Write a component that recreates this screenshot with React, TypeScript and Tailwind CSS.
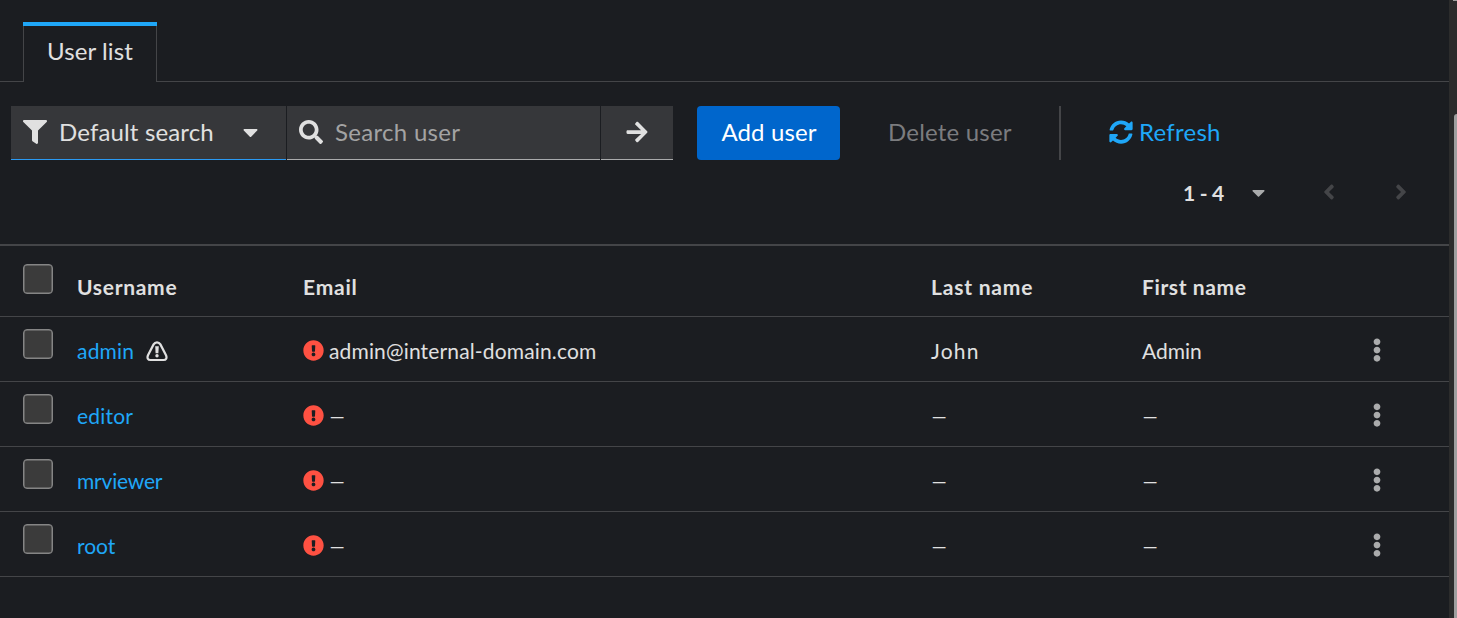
import React from "react";
import {
  FaAngleLeft,
  FaAngleRight,
  FaArrowRight,
  FaCaretDown,
  FaEllipsisV,
  FaExclamationCircle,
  FaFilter,
  FaSearch,
  FaSyncAlt,
} from "react-icons/fa";

type User = { username: string; warn?: boolean; email: string; last: string; first: string };

const users: User[] = [
  { username: "admin", warn: true, email: "admin@internal-domain.com", last: "John", first: "Admin" },
  { username: "editor", email: "–", last: "–", first: "–" },
  { username: "mrviewer", email: "–", last: "–", first: "–" },
  { username: "root", email: "–", last: "–", first: "–" },
];

const spacing: Record<string, string> = {
  admin: "tracking-[0.2px]",
  editor: "tracking-[0.2px]",
  mrviewer: "tracking-[-0.2px]",
  root: "tracking-[0px]",
  John: "tracking-[1.2px]",
  "admin@internal-domain.com": "tracking-[0.15px]",
  "–": "scale-x-[1.5] origin-left -ml-[1.5px]",
};

const columns = "grid grid-cols-[77px_226px_628px_211px_223px_84px]";

function Value({ text }: { text: string }) {
  return <span className={`inline-block ${spacing[text] ?? ""}`}>{text}</span>;
}

function WarningIcon() {
  return (
    <svg className="ml-3 h-[21px] w-[22px]" viewBox="0 0 22 21" fill="none">
      <path
        d="M7.6 3.4C9.2 .6 12.8 .6 14.4 3.4L20 14.2C21.2 17 20.1 19 17.6 19H4.4C1.9 19 .8 17 2 14.2Z"
        stroke="#e0e0e0"
        strokeWidth="2.2"
      />
      <path d="M9.2 5.2h3.6l-.4 7H9.6z" fill="#e0e0e0" />
      <circle cx="11" cy="14.8" r="1.7" fill="#e0e0e0" />
    </svg>
  );
}

function Checkbox() {
  return (
    <div className="ml-[23px] h-[30px] w-[30px] rounded-[4px] border-[1.5px] border-[#858585] bg-[#3b3b3b] shadow-[inset_0_0_0_0.5px_#858585]" />
  );
}

export default function App() {
  return (
    <div className="flex h-[618px] w-[1457px] overflow-hidden bg-[#1b1d21] font-['Lato',sans-serif] text-[#e0e0e0]">
      <main className="w-[1449px] shrink-0">
        <nav className="flex h-[82px] items-end">
          <div className="h-px w-[23px] bg-[#444548]" />
          <div className="flex h-[60px] w-[134px] flex-col border-x border-[#444548]">
            <div className="-mx-px h-1 shrink-0 bg-[#1fa7f8]" />
            <span className="pl-[23px] pt-[10px] text-2xl leading-[30px] tracking-[0.1px] whitespace-nowrap">User list</span>
          </div>
          <div className="h-px flex-1 bg-[#444548]" />
        </nav>

        <div className="flex h-[78px] pl-[11px] pt-6 text-2xl">
          <button className="flex h-[54px] w-[275px] items-center border-b border-[#2b9af3] bg-[#36373a] pb-px pl-3">
            <FaFilter className="h-6 w-6" />
            <span className="ml-3 w-[184px] whitespace-nowrap pb-px text-left tracking-[0.15px]">Default search</span>
            <FaCaretDown className="h-6 w-[15px]" />
          </button>
          <div className="ml-px flex h-[54px] w-[313px] items-center border-b border-[#aaabac] bg-[#36373a] pb-px pl-3">
            <FaSearch className="h-6 w-6" />
            <span className="ml-3 whitespace-nowrap pb-px tracking-[0.3px] text-[#a3a3a3]">Search user</span>
          </div>
          <button className="ml-px flex h-[54px] w-[72px] items-center justify-center border-b border-[#aaabac] bg-[#36373a] pb-px">
            <FaArrowRight className="h-6 w-[22px]" />
          </button>
          <button className="ml-6 flex h-[54px] w-[143px] items-center justify-center rounded-[4px] bg-[#0066cc] pb-0.5 pl-px tracking-[0.1px] text-white">
            Add user
          </button>
          <button className="ml-6 flex h-[54px] w-[171px] items-center whitespace-nowrap pb-0.5 pl-6 tracking-[0.2px] text-[#7b7c7f]">
            Delete user
          </button>
          <div className="ml-6 h-[54px] w-0.5 bg-[#444548]" />
          <button className="ml-12 flex h-[54px] items-center pb-0.5 text-[#1fa7f8]">
            <FaSyncAlt className="h-6 w-6" />
            <span className="ml-[6px] tracking-[0.25px]">Refresh</span>
          </button>
        </div>

        <div className="flex h-[84px] items-start pl-[1183px] pt-[15px]">
          <span className="flex h-9 w-[68px] items-center text-[21px] font-bold tracking-[-0.3px]">1 - 4</span>
          <FaCaretDown className="mt-[7px] h-[21px] w-[15px] text-[#aaabac]" />
          <FaAngleLeft className="ml-[54px] mt-[5px] h-6 w-[18px] text-[#444548]" />
          <FaAngleRight className="ml-[54px] mt-[5px] h-6 w-[18px] text-[#444548]" />
        </div>

        <section className="border-t-2 border-[#444548] text-[21px] leading-8">
          <div className={`${columns} h-[71px] border-b border-[#444548] font-bold`}>
            <div className="pt-[18px]"><Checkbox /></div>
            <span className="pt-[25px] tracking-[0.7px]">Username</span>
            <span className="pt-[25px] tracking-[0.8px]">Email</span>
            <span className="pt-[25px] tracking-[0.8px]">Last name</span>
            <span className="pt-[25px] tracking-[0.6px]">First name</span>
          </div>
          {users.map((u) => (
            <div key={u.username} className={`${columns} h-[65px] border-b border-[#444548]`}>
              <div className="pt-3"><Checkbox /></div>
              <div className="flex h-8 items-center pt-[34px] pb-[34px]">
                <span className={`text-[#1fa7f8] ${spacing[u.username]}`}>{u.username}</span>
                {u.warn && <WarningIcon />}
              </div>
              <div className="flex h-[66px] items-center">
                <FaExclamationCircle className="h-[21px] w-[21px] text-[#fe5142]" />
                <span className="ml-[5px] pt-0.5"><Value text={u.email} /></span>
              </div>
              <span className="pt-[18px]"><Value text={u.last} /></span>
              <span className="pt-[18px]"><Value text={u.first} /></span>
              <div className="flex h-[66px] items-center">
                <FaEllipsisV className="h-6 w-6 text-[#aaabac]" />
              </div>
            </div>
          ))}
        </section>
      </main>
      <aside className="flex h-[618px] w-2 flex-col bg-[#2c2c2c] pl-1">
        <div className="h-px bg-[#9f9f9f]" />
        <div className="ml-px mt-[113px] h-[504px] rounded-tl-[3px] bg-[#9f9f9f]" />
      </aside>
    </div>
  );
}
